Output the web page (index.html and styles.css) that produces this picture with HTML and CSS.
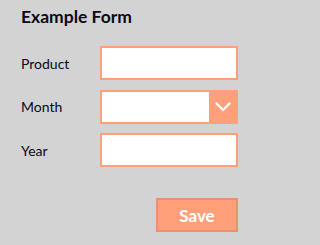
FILE: index.html
```html
<!DOCTYPE html>
<html>
<head>
<meta charset="utf-8">
<link rel="stylesheet" href="styles.css">
</head>
<body>
<div class="card">
  <h3 class="title">Example Form</h3>
  <form class="form">
    <label class="label" for="product">Product</label>
    <input class="field" id="product" type="text">
    <label class="label" for="month">Month</label>
    <div class="select">
      <span class="select-value"></span>
      <span class="select-arrow">
        <svg width="16" height="10" viewBox="0 0 16 10"><path d="M1.5 1.5 L8 8 L14.5 1.5" fill="none" stroke="#fff" stroke-width="2.2" stroke-linecap="round" stroke-linejoin="round"/></svg>
      </span>
    </div>
    <label class="label" for="year">Year</label>
    <input class="field" id="year" type="text">
  </form>
  <div class="actions">
    <button class="save" type="button">Save</button>
  </div>
</div>
</body>
</html>
```

FILE: styles.css
```css
html, body {
  margin: 0;
  padding: 0;
  background: #d3d3d3;
}
body {
  font-family: Lato, "Noto Sans", sans-serif;
  color: #0a0a1a;
  width: 273px;
  height: 245px;
}
.card {
  padding: 6px 35px 0 21px;
}
.title {
  margin: 0;
  font-size: 17.5px;
  font-weight: 700;
  line-height: 21px;
}
.form {
  margin-top: 19px;
  display: grid;
  grid-template-columns: 79px 138px;
  grid-auto-rows: 34px;
  row-gap: 9.5px;
  align-items: center;
}
.label {
  font-size: 14px;
}
.field, .select {
  box-sizing: border-box;
  width: 138px;
  height: 34px;
  margin: 0;
  border: 2px solid #ffa07a;
  background: #fff;
  outline: none;
  padding: 0 6px;
}
.select {
  display: flex;
  padding: 0;
}
.select-value {
  flex: 1;
}
.select-arrow {
  width: 27px;
  background: #ffa07a;
  display: flex;
  align-items: center;
  justify-content: center;
}
.actions {
  display: flex;
  justify-content: flex-end;
  margin-top: 31px;
}
.save {
  box-sizing: border-box;
  width: 82px;
  height: 34px;
  background: #ffa07a;
  border: 2px solid #e9906f;
  color: #fff;
  font-family: Lato, "Noto Sans", sans-serif;
  font-weight: 700;
  font-size: 17px;
  padding: 0;
}
```
